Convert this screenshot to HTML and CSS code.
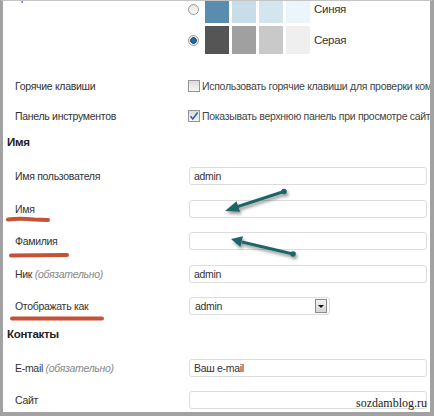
FILE: index.html
```html
<!DOCTYPE html>
<html lang="ru">
<head>
    <meta charset="UTF-8">
    <meta name="viewport" content="width=device-width, initial-scale=1.0">
    <title>Профиль</title>
    <link rel="stylesheet" href="styles.css">
</head>
<body>
    <div class="frame">
        <div class="content">
            <div class="row scheme-row">
                <div class="label">Цветовая схема</div>
                <div class="schemes">
                    <div class="scheme">
                        <span class="radio"></span>
                        <span class="swatch" style="background:#5a8cb0"></span>
                        <span class="swatch" style="background:#c9dde9"></span>
                        <span class="swatch" style="background:#d3e6f0"></span>
                        <span class="swatch" style="background:#eaf6fc"></span>
                        <span class="scheme-name">Синяя</span>
                    </div>
                    <div class="scheme">
                        <span class="radio checked"></span>
                        <span class="swatch" style="background:#555555"></span>
                        <span class="swatch" style="background:#a0a0a0"></span>
                        <span class="swatch" style="background:#c9c9c9"></span>
                        <span class="swatch" style="background:#efefef"></span>
                        <span class="scheme-name">Серая</span>
                    </div>
                </div>
            </div>

            <div class="row short">
                <div class="label">Горячие клавиши</div>
                <div class="check-line"><span class="checkbox"></span>Использовать горячие клавиши для проверки комментариев</div>
            </div>
            <div class="row short">
                <div class="label">Панель инструментов</div>
                <div class="check-line">
                    <span class="checkbox">
                        <svg width="10" height="10" viewBox="0 0 10 10"><path d="M1.5 5.2 L3.8 8 L8.6 1.6" fill="none" stroke="#2f5fb3" stroke-width="1.6"/></svg>
                    </span>Показывать верхнюю панель при просмотре сайта
                </div>
            </div>

            <h3 class="section-title">Имя</h3>
            <div class="row">
                <div class="label">Имя пользователя</div>
                <input class="field" type="text" value="admin">
            </div>
            <div class="row">
                <div class="label">Имя</div>
                <input class="field" type="text" value="">
            </div>
            <div class="row">
                <div class="label">Фамилия</div>
                <input class="field" type="text" value="">
            </div>
            <div class="row">
                <div class="label">Ник <i>(обязательно)</i></div>
                <input class="field" type="text" value="admin">
            </div>
            <div class="row">
                <div class="label">Отображать как</div>
                <div class="select">
                    <span>admin</span>
                    <span class="select-btn"></span>
                </div>
            </div>

            <h3 class="section-title">Контакты</h3>
            <div class="row">
                <div class="label">E-mail <i>(обязательно)</i></div>
                <input class="field" type="text" value="Ваш e-mail">
            </div>
            <div class="row">
                <div class="label">Сайт</div>
                <input class="field" type="text" value="">
            </div>
        </div>

        <!-- пометки поверх скриншота -->
        <svg class="marks" width="434" height="416" viewBox="0 0 434 416">
            <defs>
                <filter id="shadow" x="-20%" y="-50%" width="140%" height="200%">
                    <feDropShadow dx="1.5" dy="2.5" stdDeviation="1.6" flood-color="#000" flood-opacity="0.4"/>
                </filter>
            </defs>
            <g stroke="#c2482c" stroke-width="4" stroke-linecap="round" fill="none" opacity="0.95">
                <path d="M8 219.5 Q20 218 34 219.5 L48 220"/>
                <path d="M11 255.5 L67 255"/>
                <path d="M12 318.5 L102 318.5"/>
            </g>
            <g filter="url(#shadow)" fill="#1d6668" stroke="#1d6668">
                <line x1="284" y1="191.5" x2="238" y2="206.5" stroke-width="3"/>
                <circle cx="284" cy="191.5" r="2.8" stroke="none"/>
                <polygon points="225,211 236.5,201.3 240.1,211.7" stroke="none"/>
                <line x1="293" y1="254" x2="242" y2="242" stroke-width="3"/>
                <circle cx="293" cy="254" r="2.8" stroke="none"/>
                <polygon points="231,239 243,236.3 240.4,247" stroke="none"/>
            </g>
        </svg>

        <div class="watermark">sozdamblog.ru</div>
    </div>
</body>
</html>
```

FILE: styles.css
```css
body {
    margin: 0;
    background-color: #fff;
    font-family: "Liberation Sans", Arial, sans-serif;
    font-size: 10.5px;
    letter-spacing: -0.3px;
    color: #333;
}
.frame {
    position: relative;
    width: 434px;
    height: 416px;
    box-sizing: border-box;
    border-style: solid;
    border-color: #a2a2a2;
    border-width: 1px 4px 4px 3px;
    border-top-color: #c4c4c4;
    overflow: hidden;
    background-color: #fff;
}
.content {
    margin-top: -10px;
}
.row {
    display: grid;
    grid-template-columns: 174px 1fr;
    align-items: center;
    height: 32.5px;
    padding: 0 3px 0 12px;
}
.row.short {
    height: 30px;
}
.label {
    color: #333;
    white-space: nowrap;
}
.label i {
    color: #888;
}
.scheme-row {
    height: auto;
    align-items: start;
    padding-bottom: 17px;
}
.scheme-row .label {
    line-height: 12px;
}
.schemes {
    display: flex;
    flex-direction: column;
    gap: 3px;
    margin-top: 4px;
}
.scheme {
    display: flex;
    align-items: center;
    gap: 3px;
    height: 28px;
}
.swatch {
    width: 24px;
    height: 28px;
}
.scheme-name {
    margin-left: 1px;
    font-size: 11.5px;
    color: #333;
}
.radio {
    width: 11px;
    height: 11px;
    box-sizing: border-box;
    margin: 0 3px 0 -1px;
    border: 1px solid #9c9c9c;
    border-radius: 50%;
    background: linear-gradient(#e6e6e6, #fafafa);
}
.radio.checked {
    background: radial-gradient(circle, #1f78c4 0, #1a5f9e 2.2px, #3a4a58 3px, #e8e8e8 3.6px);
}
.check-line {
    display: flex;
    align-items: center;
    white-space: nowrap;
    color: #444;
    margin-left: -1px;
}
.checkbox {
    display: flex;
    align-items: center;
    justify-content: center;
    width: 12px;
    height: 12px;
    box-sizing: border-box;
    margin-right: 2px;
    border: 1px solid #959595;
    background: linear-gradient(#dcdcdc, #f6f6f6);
    flex-shrink: 0;
}
.section-title {
    margin: 0;
    padding: 1px 0 8px 4px;
    line-height: 20px;
    font-size: 11.5px;
    font-weight: bold;
    color: #222;
}
.field {
    width: 100%;
    height: 18px;
    box-sizing: border-box;
    margin: 0;
    padding: 0 4px;
    border: 1px solid #dcdcdc;
    border-radius: 3px;
    font-family: "Liberation Sans", Arial, sans-serif;
    font-size: 10.5px;
    letter-spacing: -0.3px;
    color: #333;
    background-color: #fff;
}
.select {
    display: flex;
    align-items: center;
    justify-content: space-between;
    width: 141px;
    height: 18px;
    box-sizing: border-box;
    padding: 0 2px 0 5px;
    border: 1px solid #dcdcdc;
    border-radius: 3px;
    color: #333;
}
.select-btn {
    position: relative;
    width: 12px;
    height: 14px;
    box-sizing: border-box;
    border: 1px solid #8a8a8a;
    background: linear-gradient(#f2f2f2, #d6d6d6);
}
.select-btn::after {
    content: "";
    position: absolute;
    left: 2px;
    top: 5px;
    border-left: 3px solid transparent;
    border-right: 3px solid transparent;
    border-top: 3px solid #111;
}
.marks {
    position: absolute;
    left: -3px;
    top: -1px;
    pointer-events: none;
}
.watermark {
    position: absolute;
    right: 3px;
    bottom: 2px;
    font-family: "Liberation Serif", "Times New Roman", serif;
    font-size: 12px;
    letter-spacing: 0;
    line-height: 14px;
    color: #1a1a1a;
}
```
